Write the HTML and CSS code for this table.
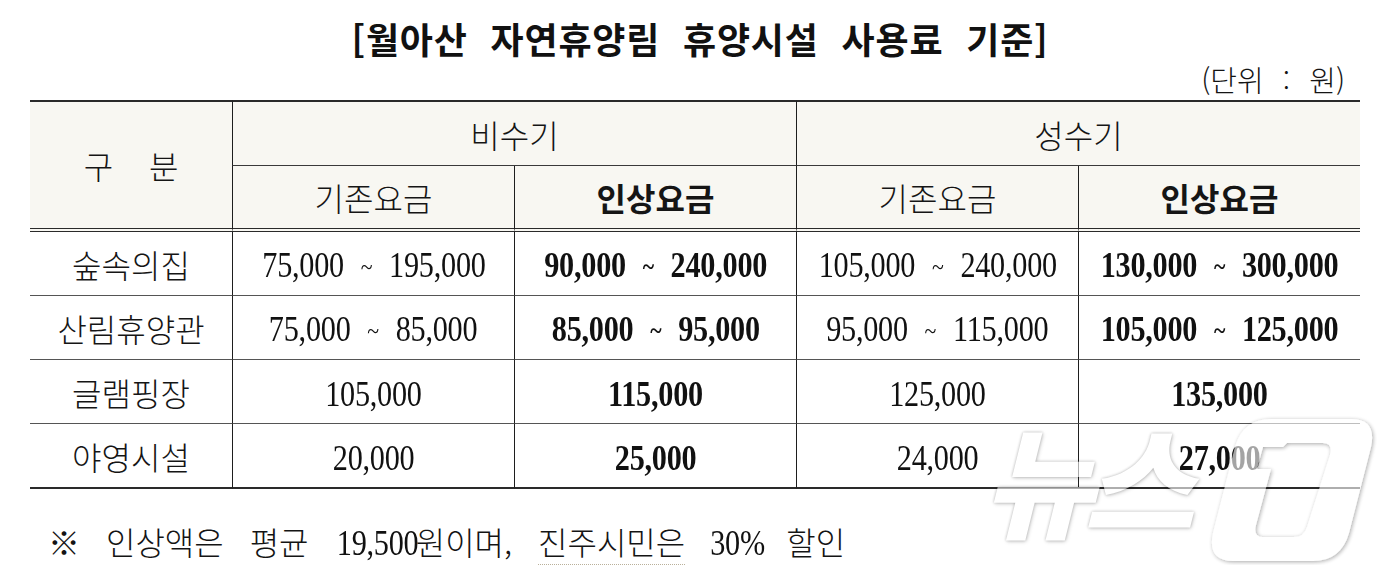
FILE: index.html
```html
<!DOCTYPE html>
<html lang="ko">
<head>
<meta charset="utf-8">
<title>월아산 자연휴양림 휴양시설 사용료 기준</title>
<link rel="stylesheet" href="styles.css">
</head>
<body>
<div class="page">
  <h1 class="title">[월아산 자연휴양림 휴양시설 사용료 기준]</h1>
  <div class="unit">(단위 : 원)</div>
  <table class="fees">
    <thead>
      <tr class="h1">
        <th class="cat" rowspan="2">구&nbsp;&nbsp;&nbsp;&nbsp;분</th>
        <th class="sep" colspan="2">비수기</th>
        <th class="sep" colspan="2">성수기</th>
      </tr>
      <tr class="h2">
        <th class="sep">기존요금</th>
        <th class="sep strong">인상요금</th>
        <th class="sep">기존요금</th>
        <th class="sep strong">인상요금</th>
      </tr>
    </thead>
    <tbody>
      <tr>
        <td class="lbl">숲속의집</td>
        <td class="sep"><span class="num">75,000<span class="tl">~</span>195,000</span></td>
        <td class="sep"><span class="num b">90,000<span class="tl">~</span>240,000</span></td>
        <td class="sep"><span class="num">105,000<span class="tl">~</span>240,000</span></td>
        <td class="sep"><span class="num b">130,000<span class="tl">~</span>300,000</span></td>
      </tr>
      <tr>
        <td class="lbl">산림휴양관</td>
        <td class="sep"><span class="num">75,000<span class="tl">~</span>85,000</span></td>
        <td class="sep"><span class="num b">85,000<span class="tl">~</span>95,000</span></td>
        <td class="sep"><span class="num">95,000<span class="tl">~</span>115,000</span></td>
        <td class="sep"><span class="num b">105,000<span class="tl">~</span>125,000</span></td>
      </tr>
      <tr>
        <td class="lbl">글램핑장</td>
        <td class="sep"><span class="num">105,000</span></td>
        <td class="sep"><span class="num b">115,000</span></td>
        <td class="sep"><span class="num">125,000</span></td>
        <td class="sep"><span class="num b">135,000</span></td>
      </tr>
      <tr class="last">
        <td class="lbl">야영시설</td>
        <td class="sep"><span class="num">20,000</span></td>
        <td class="sep"><span class="num b">25,000</span></td>
        <td class="sep"><span class="num">24,000</span></td>
        <td class="sep"><span class="num b">27,000</span></td>
      </tr>
    </tbody>
  </table>
  <p class="note">※ 인상액은 평균 <span class="num fn">19,500</span>원이며, <span class="dots">진주시민은</span> <span class="num fn">30%</span> 할인</p>

  <div class="watermark" aria-hidden="true">
    <span class="wm-text">뉴스</span>
    <svg class="wm-one" width="180" height="150" viewBox="0 0 180 150">
      <defs>
        <filter id="sh" x="-20%" y="-20%" width="140%" height="140%">
          <feGaussianBlur in="SourceAlpha" stdDeviation="2.2"/>
          <feOffset dx="1" dy="1" result="b"/>
          <feComponentTransfer><feFuncA type="linear" slope="0.55"/></feComponentTransfer>
          <feMerge><feMergeNode/><feMergeNode in="SourceGraphic"/></feMerge>
        </filter>
      </defs>
      <path filter="url(#sh)" fill="#fff" fill-rule="evenodd"
        d="M118 4 H150 Q176 4 170 32 L148 118 Q140 146 112 146 H32 Q6 146 12 118 L34 32 Q42 4 70 4 Z
           M86 28 H122 Q132 28 129 40 L106 112 Q103 122 93 122 H62 Q52 122 55 110 L70 54 H56 L62 32 H82 Z"/>
    </svg>
  </div>
</div>
</body>
</html>
```
FILE: styles.css
```css
* { box-sizing: border-box; }
html, body { margin: 0; padding: 0; background: #fff; }
body {
  width: 1400px;
  height: 576px;
  overflow: hidden;
  font-family: "Noto Sans CJK KR", "Noto Sans", sans-serif;
  color: #141414;
}
.page { position: relative; width: 1400px; height: 576px; }

.title {
  margin: 0;
  padding-top: 13px;
  font-size: 36px;
  line-height: 50px;
  font-weight: 700;
  text-align: center;
  word-spacing: 12px;
  color: #111;
  letter-spacing: 0.8px;
}
.unit {
  margin: 1px 55px 5px 0;
  text-align: right;
  font-size: 29px;
  line-height: 31px;
  font-weight: 300;
  word-spacing: 11px;
}

.fees {
  margin-left: 30px;
  width: 1330px;
  border-collapse: separate;
  border-spacing: 0;
  table-layout: fixed;
}
.fees th, .fees td {
  padding: 0;
  text-align: center;
  vertical-align: middle;
  font-size: 32px;
  font-weight: 300;
  color: #151515;
  white-space: nowrap;
}
.fees th { background: #f8f7f2; }
.fees .cat { width: 202px; }
.fees .sep { border-left: 1px solid #1e1e1e; }
.fees tr.h1 th { border-top: 2px solid #2a2a2a; height: 66px; border-bottom: 1px solid #3a3a3a; }
.fees tr.h1 th.cat { border-bottom: 4px double #2a2a2a; }
.fees tr.h2 th { height: 66px; border-bottom: 4px double #2a2a2a; }
.fees th.strong { font-weight: 700; }
.fees tbody td { height: 64px; border-bottom: 1px solid #555; }
.fees tbody tr.last td { border-bottom: 2px solid #2a2a2a; height: 65px; }

.num {
  display: inline-block;
  white-space: nowrap;
  font-family: "Liberation Serif", "Times New Roman", serif;
  font-size: 36px;
  line-height: 40px;
  transform: scaleX(0.84);
  letter-spacing: -0.3px;
  color: #111;
  margin: 0 -30px;
}
.num.b { font-weight: 700; }
.tl { display: inline-block; margin: 0 20px; font-size: 26px; vertical-align: 2px; }

.note {
  margin: 31px 0 0 48px;
  font-size: 32px;
  line-height: 42px;
  font-weight: 300;
  word-spacing: 17px;
  white-space: nowrap;
}
.num.fn { font-size: 36px; margin: 0 -10px 0 -6px; }
.dots { border-bottom: 1px dotted #b9b09a; }

.watermark {
  position: absolute;
  left: 996px;
  top: 410px;
  width: 400px;
  height: 160px;
  display: flex;
  align-items: flex-start;
  opacity: 0.62;
}
.wm-text {
  display: inline-block;
  font-family: "Noto Sans CJK KR", sans-serif;
  font-weight: 900;
  font-size: 120px;
  line-height: 150px;
  letter-spacing: -10px;
  color: #fff;
  transform: skewX(-14deg);
  text-shadow: 0 0 3px rgba(0,0,0,0.4), 1px 1px 4px rgba(0,0,0,0.3);
  margin-top: -8px;
}
.wm-one { margin-left: 4px; margin-top: 5px; }
```
